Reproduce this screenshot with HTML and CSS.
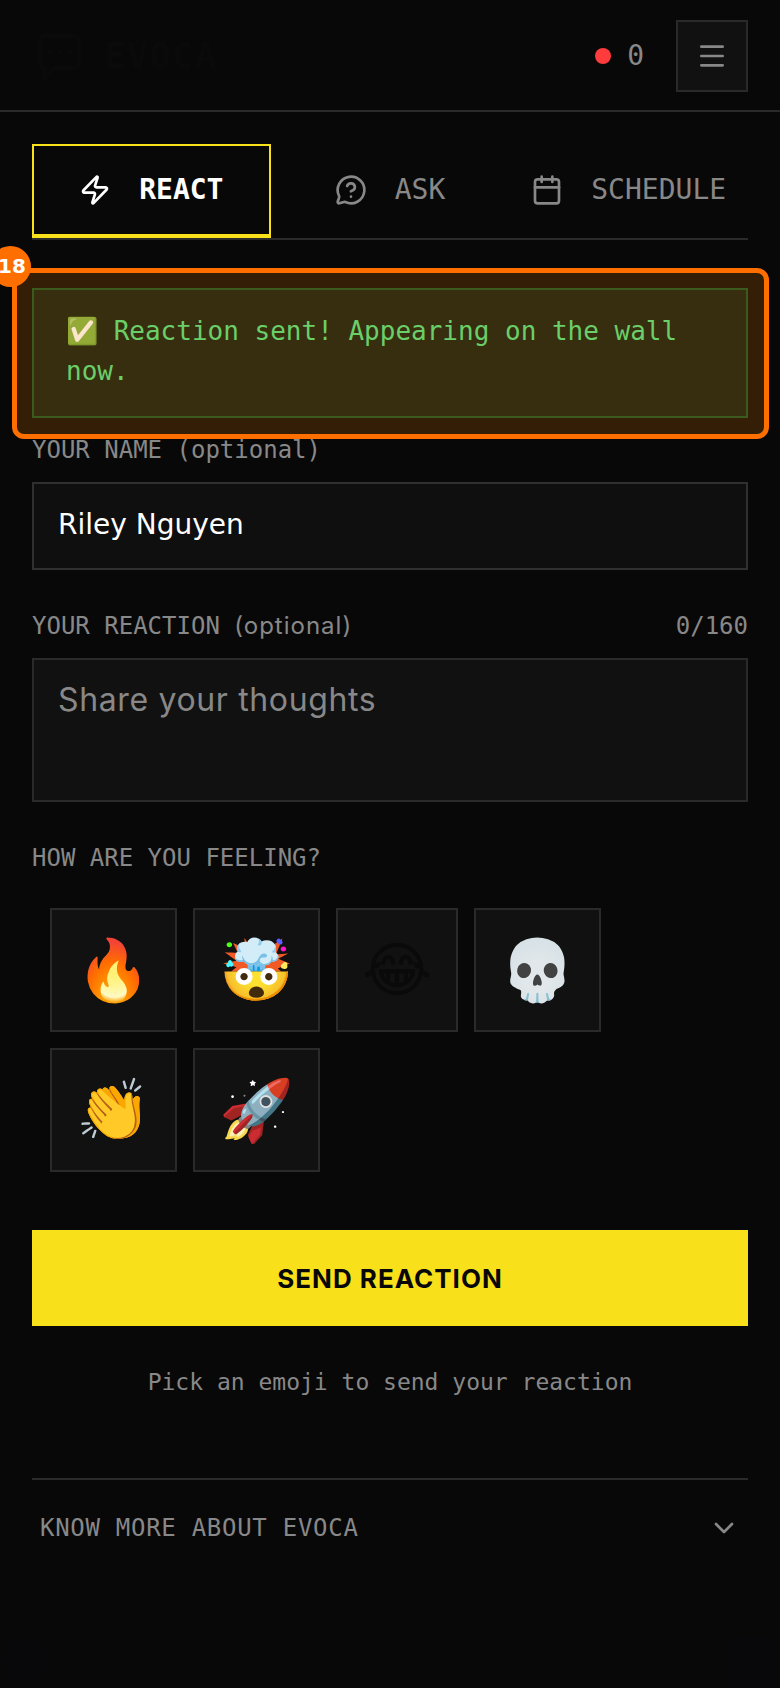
FILE: index.html
```html
<!DOCTYPE html>
<html lang="en">
<head>
  <meta charset="UTF-8" />
  <meta name="viewport" content="width=device-width, initial-scale=1.0" />
  <title>Evoca</title>
  <link rel="stylesheet" href="styles.css">
</head>
<body>

<header class="header">
  <a class="logo" href="#">
    <svg width="56" height="56" viewBox="0 0 56 56" fill="none" stroke="currentColor" stroke-width="4">
      <path d="M12 40V50L22 40H43a4 4 0 0 0 4-4V12a4 4 0 0 0-4-4H12a4 4 0 0 0-4 4V36a4 4 0 0 0 4 4z" />
      <g fill="currentColor" stroke="none">
        <circle cx="18" cy="24" r="2.5" />
        <circle cx="28" cy="24" r="2.5" />
        <circle cx="38" cy="24" r="2.5" />
      </g>
    </svg>
    <span>EVOCA</span>
  </a>
  <div class="header-right">
    <div class="live"><span class="live-dot"></span>0</div>
    <button class="menu-btn" type="button" aria-label="Menu">
      <svg class="icon" viewBox="0 0 24 24"><path d="M4 5h16M4 12h16M4 19h16" /></svg>
    </button>
  </div>
</header>

<main class="main">
  <!-- Tabs -->
  <nav class="tabs">
    <button class="tab active" type="button">
      <svg class="icon" viewBox="0 0 24 24"><path d="M4 14a1 1 0 0 1-.78-1.63l9.9-10.2a.5.5 0 0 1 .86.46l-1.92 6.02A1 1 0 0 0 13 10h7a1 1 0 0 1 .78 1.63l-9.9 10.2a.5.5 0 0 1-.86-.46l1.92-6.02A1 1 0 0 0 11 14z" /></svg>
      REACT
    </button>
    <button class="tab" type="button">
      <svg class="icon" viewBox="0 0 24 24"><path d="M2.992 16.342a2 2 0 0 1 .094 1.167l-1.065 3.29a1 1 0 0 0 1.236 1.168l3.413-.998a2 2 0 0 1 1.099.092 10 10 0 1 0-4.777-4.719" /><path d="M9.09 9a3 3 0 0 1 5.83 1c0 2-3 3-3 3" /><path d="M12 17h.01" /></svg>
      ASK
    </button>
    <button class="tab" type="button">
      <svg class="icon" viewBox="0 0 24 24"><path d="M8 2v4M16 2v4" /><rect x="3" y="4" width="18" height="18" rx="2" /><path d="M3 10h18" /></svg>
      SCHEDULE
    </button>
  </nav>

  <div class="notice">
    <p class="notice-text" role="status">✅ Reaction sent! Appearing on the wall now.</p>
    <div class="highlight"></div>
    <span class="badge">18</span>
  </div>

  <!-- Reaction Form -->
  <form class="form">
    <div class="form-group">
      <div class="label-row">
        <label for="name">YOUR NAME (optional)</label>
      </div>
      <input type="text" id="name" class="name-input" value="Riley Nguyen">
    </div>

    <div class="form-group">
      <div class="label-row">
        <label for="reaction">YOUR REACTION <span class="optional">(optional)</span></label>
        <span>0/160</span>
      </div>
      <textarea id="reaction" class="reaction-input" placeholder="Share your thoughts"></textarea>
    </div>

    <div class="form-group">
      <div class="label-row"><span id="feeling">HOW ARE YOU FEELING?</span></div>
      <div class="emojis" role="group" aria-labelledby="feeling">
        <button type="button" class="emoji">🔥</button>
        <button type="button" class="emoji">🤯</button>
        <button type="button" class="emoji">😂</button>
        <button type="button" class="emoji">💀</button>
        <button type="button" class="emoji">👏</button>
        <button type="button" class="emoji">🚀</button>
      </div>
    </div>

    <button type="button" class="send-btn">SEND REACTION</button>
    <p class="hint">Pick an emoji to send your reaction</p>
  </form>

  <button class="more" type="button">
    KNOW MORE ABOUT EVOCA
    <svg class="icon" viewBox="0 0 24 24"><path d="m6 9 6 6 6-6" /></svg>
  </button>
</main>

<div class="corner corner-left"></div>
<div class="corner corner-right"></div>

</body>
</html>
```
FILE: styles.css
```css
:root {
  --bg-color: #080808;
  --panel-color: #111;
  --line-color: #2a2a2a;
  --muted-color: #888;
  --dark-color: #0a0a0a;
  --main-color: #f8e01a;
  --mark-color: #ff6f00;
  --mono: "DejaVu Sans Mono", monospace;
}

* {
  box-sizing: border-box;
}

body {
  margin: 0;
  min-height: 100vh;
  background: var(--bg-color);
  color: var(--muted-color);
  font-family: var(--mono);
  font-size: 24px;
  line-height: 32px;
}

button {
  cursor: pointer;
  border-radius: 0;
}

.icon {
  width: 32px;
  height: 32px;
  flex: none;
  fill: none;
  stroke: currentColor;
  stroke-width: 2;
  stroke-linecap: round;
  stroke-linejoin: round;
}

/* Header */
.header {
  display: flex;
  align-items: center;
  justify-content: space-between;
  padding: 20px 32px 18px;
  border-bottom: 2px solid var(--line-color);
}

.logo {
  display: flex;
  align-items: center;
  gap: 16px;
  color: var(--dark-color);
  font-size: 36px;
  font-weight: bold;
  letter-spacing: 1px;
  text-decoration: none;
}

.header-right {
  display: flex;
  align-items: center;
  gap: 32px;
}

.live {
  display: flex;
  align-items: center;
  gap: 16px;
  font-size: 28px;
}

.live-dot {
  width: 16px;
  height: 16px;
  border-radius: 50%;
  background: #ff3b3b;
}

.menu-btn {
  display: flex;
  align-items: center;
  justify-content: center;
  width: 72px;
  height: 72px;
  padding: 0;
  border: 2px solid var(--line-color);
  background: var(--panel-color);
  color: var(--muted-color);
}

.main {
  padding: 32px;
}

/* Tabs */
.tabs {
  display: flex;
  border-bottom: 2px solid var(--line-color);
}

.tab {
  flex: 1 1 0;
  display: flex;
  align-items: center;
  justify-content: center;
  gap: 28px;
  padding: 28px 0;
  border: 2px solid transparent;
  border-bottom-width: 4px;
  background: none;
  color: var(--muted-color);
  font-family: var(--mono);
  font-size: 28px;
  line-height: 32px;
}

.tab.active {
  border-color: var(--main-color);
  color: #fff;
  font-weight: bold;
}

/* Success message */
.notice {
  position: relative;
  margin: 48px 0 16px;
}

.notice-text {
  margin: 0;
  padding: 21px 32px 25px;
  border: 2px solid #105025;
  background: #0a1a13;
  color: #4ade80;
  font-size: 26px;
  line-height: 40px;
}

.highlight {
  position: absolute;
  inset: -20px -21px -21px -20px;
  border: 5px solid var(--mark-color);
  border-radius: 12px;
  background: rgba(255, 138, 0, 0.18);
}

.badge {
  position: absolute;
  top: -42px;
  left: -42px;
  width: 41px;
  height: 41px;
  padding-left: 3px;
  border-radius: 50%;
  background: var(--mark-color);
  color: #fff;
  font-family: "DejaVu Sans", sans-serif;
  font-size: 20px;
  font-weight: bold;
  line-height: 40px;
  text-align: center;
}

/* Form */
.form-group {
  margin-bottom: 40px;
}

.label-row {
  display: flex;
  justify-content: space-between;
  margin-bottom: 16px;
}

.optional {
  font-family: Inter, sans-serif;
  letter-spacing: 1px;
}

.name-input,
.reaction-input {
  display: block;
  width: 100%;
  border: 2px solid var(--line-color);
  border-radius: 0;
  background: var(--panel-color);
  color: #fff;
  resize: none;
}

.name-input {
  height: 88px;
  padding: 0 24px 4px;
  border-color: #303030;
  background: #0f0f0f;
  font-family: "DejaVu Sans", sans-serif;
  font-size: 28px;
}

.reaction-input {
  height: 144px;
  padding: 16px 24px;
  font-family: Inter, sans-serif;
  font-size: 32px;
  line-height: 48px;
  letter-spacing: 0.02em;
}

.reaction-input::placeholder {
  color: var(--muted-color);
}

.emojis {
  display: flex;
  flex-wrap: wrap;
  gap: 16px;
  padding: 18px;
}

.emoji {
  height: 124px;
  padding: 0 24px;
  border: 2px solid var(--line-color);
  background: var(--panel-color);
  color: var(--dark-color);
  font-family: "DejaVu Sans", sans-serif;
  font-size: 60px;
}

.send-btn {
  width: 100%;
  height: 96px;
  border: none;
  background: var(--main-color);
  color: #080808;
  font-family: Inter, sans-serif;
  font-size: 26px;
  font-weight: bold;
  letter-spacing: 1px;
}

.hint {
  margin: 40px 0 80px;
  font-size: 23px;
  text-align: center;
}

.more {
  display: flex;
  align-items: center;
  justify-content: space-between;
  width: 100%;
  padding: 32px 8px;
  border: none;
  border-top: 2px solid var(--line-color);
  background: none;
  color: var(--muted-color);
  font-family: var(--mono);
  font-size: 24px;
  line-height: 32px;
  letter-spacing: 0.03em;
}

/* Faint shapes in the bottom corners */
.corner {
  position: fixed;
  background: #08080b;
}

.corner-left {
  left: 2px;
  bottom: 6px;
  width: 44px;
  height: 44px;
  border-radius: 50%;
}

.corner-right {
  right: 0;
  bottom: 0;
  width: 50px;
  height: 50px;
}
```
